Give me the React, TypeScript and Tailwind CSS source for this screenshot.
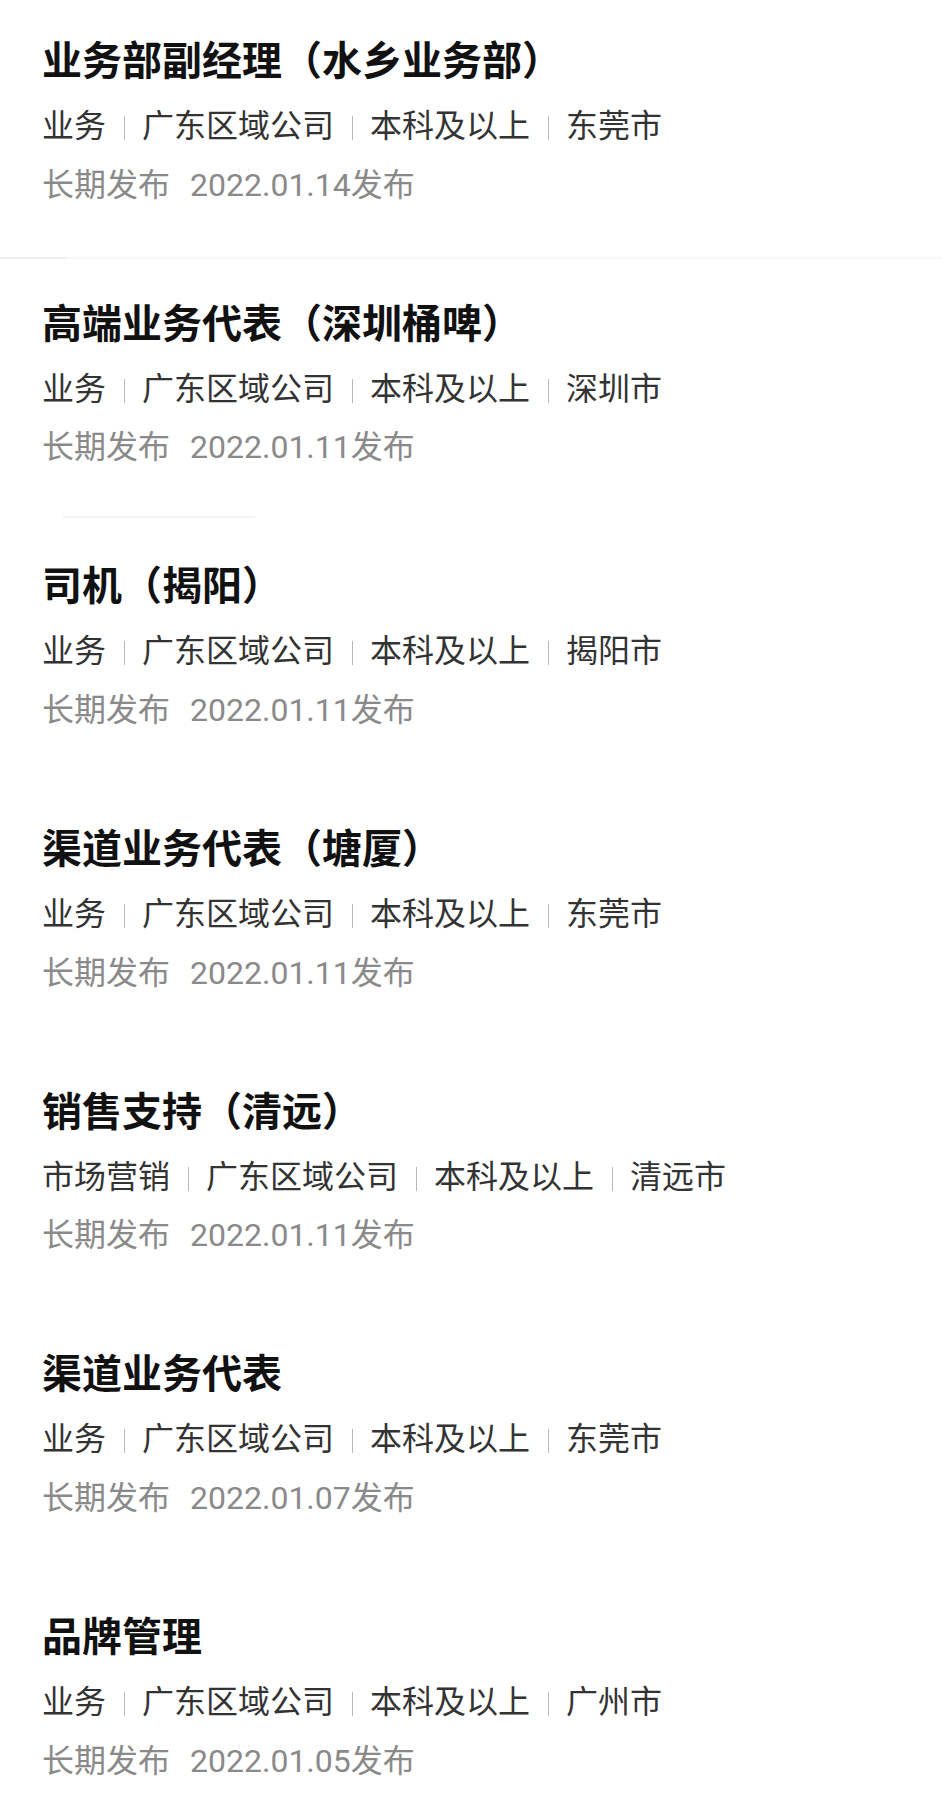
import React from "react"

type Job = {
  title: string
  tags: string[]
  date: string
}

const jobs: Job[] = [
  { title: "业务部副经理（水乡业务部）", tags: ["业务", "广东区域公司", "本科及以上", "东莞市"], date: "2022.01.14" },
  { title: "高端业务代表（深圳桶啤）", tags: ["业务", "广东区域公司", "本科及以上", "深圳市"], date: "2022.01.11" },
  { title: "司机（揭阳）", tags: ["业务", "广东区域公司", "本科及以上", "揭阳市"], date: "2022.01.11" },
  { title: "渠道业务代表（塘厦）", tags: ["业务", "广东区域公司", "本科及以上", "东莞市"], date: "2022.01.11" },
  { title: "销售支持（清远）", tags: ["市场营销", "广东区域公司", "本科及以上", "清远市"], date: "2022.01.11" },
  { title: "渠道业务代表", tags: ["业务", "广东区域公司", "本科及以上", "东莞市"], date: "2022.01.07" },
  { title: "品牌管理", tags: ["业务", "广东区域公司", "本科及以上", "广州市"], date: "2022.01.05" },
]

function JobItem({ job, index }: { job: Job; index: number }) {
  return (
    <div className="flex h-[262.7px] flex-col px-[42px] pt-[38px]">
      <h3 className="text-[40px] font-bold leading-[48px] text-[#111]">{job.title}</h3>
      <div className="mt-[20px] flex items-center text-[32px] leading-[40px] text-[#333]">
        {job.tags.map((t, i) => (
          <React.Fragment key={i}>
            {i > 0 && <span className="mx-[17.5px] mt-[4px] h-[24px] w-px shrink-0 bg-[#b8b8b8]" />}
            <span>{t}</span>
          </React.Fragment>
        ))}
      </div>
      <div className="mt-[18.5px] flex text-[32px] leading-[40px] text-[#8a8a8a]">
        <span>长期发布</span>
        <span className="ml-[20px]">{job.date}发布</span>
      </div>
      {index === 0 && (
        <div className="-mx-[42px] mt-auto mb-[4px] flex h-[2px]">
          <div className="w-[66px] bg-[#eeeeee]" />
          <div className="flex-1 bg-[#f8f8f8]" />
        </div>
      )}
      {index === 1 && (
        <div className="mt-auto mb-[7px] ml-[21px] h-[2px] w-[192px] bg-[#f3f3f3]" />
      )}
    </div>
  )
}

export default function App() {
  return (
    <main
      className="min-h-screen w-[942px] bg-white"
      style={{ fontFamily: 'Roboto, "Noto Sans CJK SC", sans-serif' }}
    >
      {jobs.map((job, i) => (
        <JobItem key={i} job={job} index={i} />
      ))}
    </main>
  )
}
